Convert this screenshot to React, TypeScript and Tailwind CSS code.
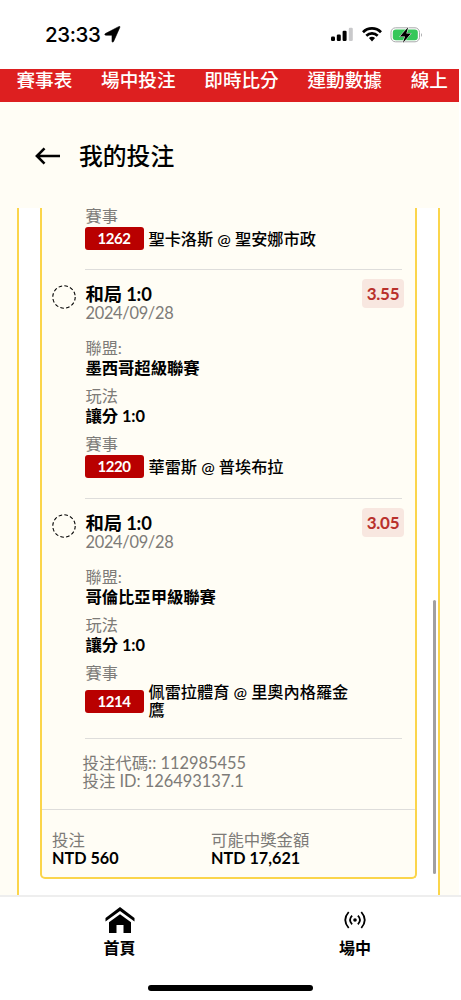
const navItems = ["賽事表", "場中投注", "即時比分", "運動數據", "線上"];

const legs = [
  { odds: "3.55", league: "墨西哥超級聯賽", code: "1220", match: "華雷斯 @ 普埃布拉" },
  { odds: "3.05", league: "哥倫比亞甲級聯賽", code: "1214", match: "佩雷拉體育 @ 里奧內格羅金鷹" },
];

function StatusBar() {
  return (
    <header className="flex h-[69px] shrink-0 items-center bg-white pl-[45px] pr-[38px] font-['Inter',sans-serif]">
      <span className="text-[20.5px] font-medium leading-6 tracking-[-0.4px]">23:33</span>
      <svg className="ml-1 size-[17px]" viewBox="0 0 17 17" aria-hidden>
        <path d="M15.8 1.4 L9.6 15.4 Q8.6 17 8 15.4 V9.2 H1.8 Q-.1 8.6 1.4 7.6 L14.6 .7 Q16.5 -.1 15.8 1.4Z" stroke="black" strokeWidth=".6" />
      </svg>
      <svg className="ml-auto h-[15px] w-[24px]" viewBox="0 0 24 15" aria-hidden>
        <rect x="1" y="9.5" width="4" height="4.5" rx="1.2" />
        <rect x="6.8" y="7.5" width="4" height="6.5" rx="1.2" />
        <rect x="12.6" y="3.8" width="4" height="10.2" rx="1.2" />
        <rect x="18.8" y="0.8" width="4" height="13.2" rx="1.2" fill="#c9c9cb" />
      </svg>
      <svg className="ml-2 h-[15px] w-[20px]" viewBox="0 0 20 15" fill="none" stroke="black" strokeWidth="2.7" aria-hidden>
        <path d="M1 5.2 C6 .2 14 .2 19 5.2" />
        <path d="M4.3 8.7 C7.6 5.6 12.4 5.6 15.7 8.7" />
        <path d="M6.9 11.1 Q10 8.6 13.1 11.1 L10 14.4Z" fill="black" stroke="none" />
      </svg>
      <svg className="ml-2 h-[18px] w-[33px]" viewBox="0 0 33 18" aria-hidden>
        <rect x="1" y="1.8" width="28.5" height="14" rx="4.5" fill="none" stroke="#a9aaac" />
        <rect x="2.8" y="3.5" width="25" height="10.7" rx="3" fill="#35c759" />
        <path d="M31 7 Q33 9 31 11Z" fill="#a9aaac" />
        <path d="M18.3 1 L9.8 10.4 H15 L12.8 17 L21 7.6 H16.3Z" stroke="white" strokeWidth="1" paintOrder="stroke" />
      </svg>
    </header>
  );
}

function Label({ children }: { children: React.ReactNode }) {
  return <div className="h-[19px] pl-px text-[16.2px] leading-[18px] text-[#7d7b78]">{children}</div>;
}

function Value({ children }: { children: React.ReactNode }) {
  return <div className="mb-[9px] h-5 pl-px text-[16.4px] font-bold leading-[19px] tracking-[-0.1px]">{children}</div>;
}

function Match({ code, children }: { code: string; children: React.ReactNode }) {
  return (
    <div className="flex min-h-[25px] items-center">
      <span className="mr-[5px] h-[23px] w-[59px] shrink-0 rounded-[3px] bg-[#b90000] text-center text-[15px] font-bold leading-[23px] tracking-[-0.5px] text-white">
        {code}
      </span>
      <span className="w-[212px] text-[16.2px] font-medium leading-[18px]">{children}</span>
    </div>
  );
}

function Leg({ odds, league, code, match }: (typeof legs)[number]) {
  return (
    <div className="relative ml-[43px] mr-[13px] border-t border-[#dedddb] pb-[19px] pt-[14px]">
      <svg className="absolute -left-[33px] top-[15px] size-6" viewBox="0 0 24 24" aria-hidden>
        <circle cx="12" cy="12" r="11.2" fill="none" stroke="black" strokeWidth="1.1" strokeDasharray="3.6 2.265" />
      </svg>
      <div className="flex h-[55px] justify-between">
        <div className="pl-px">
          <div className="text-[18.4px] font-bold leading-[20px] tracking-[-0.2px]">和局 1:0</div>
          <div className="text-[16.4px] leading-[18px] tracking-[-0.3px] text-[#7d7b78]">2024/09/28</div>
        </div>
        <span className="-mr-0.5 -mt-[5px] h-[29px] w-[42px] rounded-[4px] bg-[#f8e7e0] text-center text-[17px] font-bold leading-[30px] tracking-[-0.3px] text-[#b9302b]">
          {odds}
        </span>
      </div>
      <Label>聯盟:</Label>
      <Value>{league}</Value>
      <Label>玩法</Label>
      <Value>讓分 1:0</Value>
      <Label>賽事</Label>
      <Match code={code}>{match}</Match>
    </div>
  );
}

export default function App() {
  return (
    <div className="flex h-[1000px] w-[461px] flex-col overflow-hidden bg-white font-['Lato','Noto_Sans_CJK_TC',sans-serif] text-black">
      <StatusBar />
      <nav className="mr-[2px] flex h-[33px] shrink-0 gap-[28.8px] overflow-hidden whitespace-nowrap bg-[#dd1f20] pl-[16.5px] text-[18.6px] font-medium leading-[22px] text-white">
        {navItems.map((item) => (
          <span key={item}>{item}</span>
        ))}
      </nav>

      <main className="mr-[2px] flex h-[793px] shrink-0 flex-col bg-[#fffdf5]">
        <div className="flex h-[106px] items-center gap-[18px] pl-[35px] pt-px">
          <svg className="h-[18px] w-[26px]" viewBox="0 0 26 18" fill="none" stroke="black" strokeWidth="2.6" aria-hidden>
            <path d="M25 9 H2 M9.5 1.3 L1.9 9 L9.5 16.7" />
          </svg>
          <h1 className="text-[23.8px] font-medium leading-7">我的投注</h1>
        </div>

        <div className="relative mx-[16.5px] mr-[19px] flex-1 overflow-hidden border-x-[2.5px] border-[#fbd54b] bg-white px-[21px]">
          <div className="h-[671px] overflow-hidden rounded-b-[5px] border-[2.5px] border-t-0 border-[#fbd54b] bg-[#fffdf5]">
            <div className="ml-[43px] h-[61px]">
              <div className="h-[18px] pl-px text-[16.2px] leading-[16px] text-[#7d7b78]">賽事</div>
              <Match code="1262">聖卡洛斯 @ 聖安娜市政</Match>
            </div>
            {legs.map((leg) => (
              <Leg key={leg.code} {...leg} />
            ))}
            <div className="ml-[43px] mr-[13px] border-t border-[#dedddb]" />
            <div className="h-[70px] pl-[41px] pt-[15px] text-[16.4px] leading-[18px] text-[#7d7b78]">
              <div>投注代碼:: 112985455</div>
              <div>投注 ID: 126493137.1</div>
            </div>
            <div className="grid grid-cols-[159px_1fr] border-t border-[#dedddb] pl-[10.5px] pt-[21px] text-[16.4px] leading-[18px]">
              <div>
                <div className="text-[#7d7b78]">投注</div>
                <div className="text-[16.2px] font-bold leading-[17px]">NTD 560</div>
              </div>
              <div>
                <div className="text-[#7d7b78]">可能中獎金額</div>
                <div className="text-[16.2px] font-bold leading-[17px]">NTD 17,621</div>
              </div>
            </div>
          </div>
          <div className="absolute right-0.5 top-[392px] h-[274px] w-[3px] rounded-full bg-[#a19fa0]" />
        </div>
      </main>

      <footer className="flex h-[105px] shrink-0 flex-col border-t-2 border-[#eeeeee] bg-white">
        <div className="flex h-[84px] text-[16px] font-bold leading-5">
          <a className="ml-[2px] flex w-[235px] shrink-0 flex-col items-center pt-[10px]">
            <svg className="h-[27px] w-[30px]" viewBox="0 0 30 27" aria-hidden>
              <path d="M15 0 L29.5 11 V14.5 L15 4 L.5 14.5 V11Z" />
              <path d="M15 7.2 L26 15.3 V26 H18.5 V18 H11.5 V26 H4 V15.3Z" />
            </svg>
            <span className="mt-1">首頁</span>
          </a>
          <a className="flex w-[236px] shrink-0 flex-col items-center pt-[14px]">
            <svg className="h-[18px] w-[22px]" viewBox="0 0 22 18" fill="none" stroke="black" strokeWidth="1.8" aria-hidden>
              <circle cx="11" cy="9" r="1.8" fill="black" stroke="none" />
              <path d="M8.1 4.7 Q3.9 9 8.1 13.3 M13.9 4.7 Q18.1 9 13.9 13.3 M4.7 1 Q-2.2 9 4.7 17 M17.3 1 Q24.2 9 17.3 17" />
            </svg>
            <span className="mt-[9px]">場中</span>
          </a>
        </div>
        <div className="ml-[148px] mt-1 h-[6px] w-[165px] rounded-full bg-black" />
      </footer>
    </div>
  );
}
